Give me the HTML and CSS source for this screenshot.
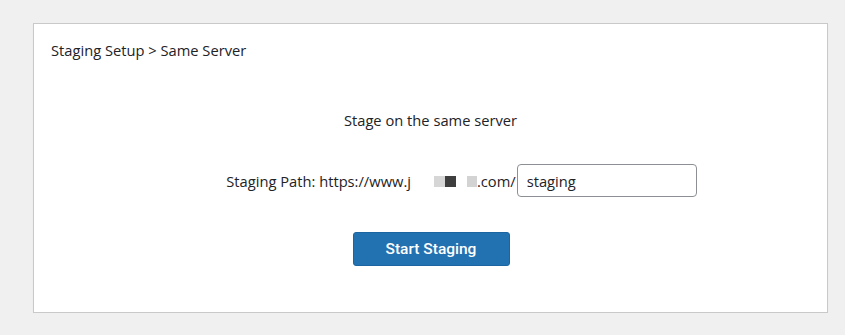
FILE: index.html
```html
<!DOCTYPE html>
<html>
<head>
<meta charset="utf-8">
<link rel="stylesheet" href="styles.css">
</head>
<body>
<div class="card">
  <div class="crumb">Staging Setup &gt; Same Server</div>
  <div class="content">
    <div class="heading">Stage on the same server</div>
    <div class="path-row">
      <span class="label">Staging Path: https://www.j</span><span class="blur"></span><span class="blk light"></span><span class="blk dark"></span><span class="gap"></span><span class="blk light2"></span><span class="label">.com/</span><input class="path-input" type="text" value="staging">
    </div>
    <button class="btn">Start Staging</button>
  </div>
</div>
</body>
</html>
```

FILE: styles.css
```css
html, body {
  margin: 0;
  padding: 0;
  background: #f0f0f1;
}
body {
  font-family: "Open Sans", "Liberation Sans", sans-serif;
  font-size: 14.7px;
  color: #1d2327;
  padding-top: 23px;
}
.card {
  margin-left: 33px;
  width: 793px;
  height: 288px;
  background: #fff;
  border: 1px solid #c9c9cc;
  box-shadow: 0 1px 1px rgba(0,0,0,0.06);
  box-sizing: content-box;
}
.crumb {
  padding: 16px 0 0 17px;
  line-height: 20px;
}
.content {
  display: flex;
  flex-direction: column;
  align-items: center;
}
.heading {
  margin-top: 50px;
  line-height: 20px;
}
.path-row {
  margin-top: 34px;
  margin-left: 62px;
  display: flex;
  align-items: center;
  line-height: 20px;
}
.blur {
  display: inline-block;
  width: 23px;
  height: 12px;
}
.blk {
  display: inline-block;
  height: 11px;
  margin-top: 1px;
}
.light { width: 11px; background: #d6d6d6; }
.dark { width: 11px; background: #3e3e3e; }
.gap { display: inline-block; width: 11px; }
.light2 { width: 10px; background: #d3d3d3; }
.path-input {
  margin-left: 1px;
  width: 180px;
  height: 33px;
  box-sizing: border-box;
  border: 1px solid #8c8f94;
  border-radius: 4px;
  padding: 0 9px;
  font-family: "Open Sans", "Liberation Sans", sans-serif;
  font-size: 14.7px;
  color: #1d2327;
  background: #fff;
}
.btn {
  margin-top: 35px;
  width: 157px;
  height: 34px;
  background: #2271b1;
  border: 1px solid #1c65a3;
  border-radius: 3px;
  color: #fff;
  font-family: Roboto, "Liberation Sans", sans-serif;
  font-weight: 500;
  font-size: 15.5px;
  margin-left: 1px;
}
```
